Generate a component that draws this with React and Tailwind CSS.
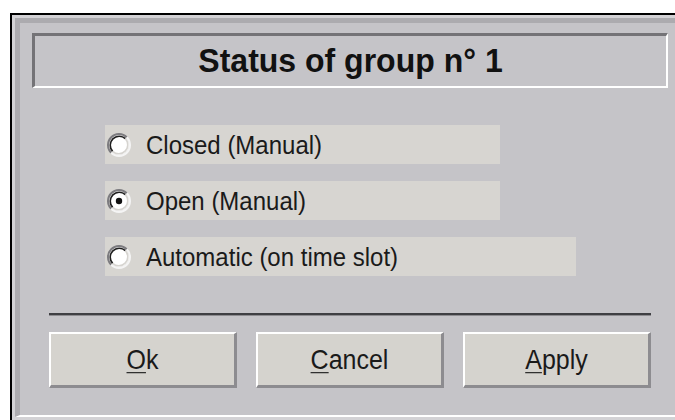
import { useState } from "react";

const options = [
    { id: "closed", label: "Closed (Manual)", width: "w-[395px]" },
    { id: "open", label: "Open (Manual)", width: "w-[395px]" },
    { id: "auto", label: "Automatic (on time slot)", width: "w-[471px]" },
];

// classic sunken radio knob
const RadioKnob = ({ checked }) => (
    <svg width="24" height="24" viewBox="0 0 24 24" className="shrink-0">
        <circle cx="12" cy="12" r="10" fill="#ffffff" />
        <path d="M4.22 19.78 A11 11 0 0 1 19.78 4.22" fill="none" stroke="#7d7c80" strokeWidth="2" />
        <path d="M19.78 4.22 A11 11 0 0 1 4.22 19.78" fill="none" stroke="#f4f4f4" strokeWidth="2" />
        <path d="M5.64 18.36 A9 9 0 0 1 18.36 5.64" fill="none" stroke="#1e1e1e" strokeWidth="1.6" />
        <path d="M18.36 5.64 A9 9 0 0 1 5.64 18.36" fill="none" stroke="#d6d4d0" strokeWidth="1.6" />
        {checked && <circle cx="12" cy="12" r="3.2" fill="#111111" />}
    </svg>
);

const Button = ({ mnemonic, rest }) => (
    <button
        type="button"
        className="w-[188px] h-[56px] flex items-center justify-center bg-[#d5d3ce] border-t-2 border-l-2 border-white border-b-[3px] border-r-[3px] border-b-[#8d8c90] border-r-[#8d8c90] text-[25px] text-[#1a1a1a]"
    >
        <span className="inline-block scale-y-110">
            <span className="underline underline-offset-[3px] decoration-1">{mnemonic}</span>
            {rest}
        </span>
    </button>
);

export default function App() {
    const [status, setStatus] = useState("open");

    return (
        <div className="w-[675px] h-[420px] overflow-hidden bg-white font-['Liberation_Sans',Arial,sans-serif]">
            <div className="ml-[10px] mt-[13px] w-[680px] h-[407px] border-l-2 border-t-2 border-black bg-[#d3d2d5] pl-[3px] pt-[3px]">
                <div className="h-[399px] flex flex-col bg-[#c5c4c8] border-l-[5px] border-t-[5px] border-[#acabaf] border-b-2 border-b-white">
                    {/* title bar */}
                    <div className="ml-[12px] mt-[10px] w-[636px] h-[55px] flex items-center justify-center border-t-[3px] border-l-[3px] border-[#747377] border-b-2 border-r-2 border-b-white border-r-white">
                        <span className="inline-block -mt-[2px] text-[32px] font-bold text-[#111111] leading-none scale-y-105">Status of group n° 1</span>
                    </div>

                    {/* status choices */}
                    <div className="ml-[85px] mt-[37px] flex flex-col gap-[17px]">
                        {options.map((opt) => (
                            <label
                                key={opt.id}
                                className={`${opt.width} h-[39px] flex items-center bg-[#d7d5d1] pl-[2px] cursor-default`}
                                onClick={() => setStatus(opt.id)}
                            >
                                <RadioKnob checked={status === opt.id} />
                                <span className="inline-block ml-[15px] text-[24px] text-[#1a1a1a] leading-none scale-y-110 origin-left">{opt.label}</span>
                            </label>
                        ))}
                    </div>

                    <div className="ml-[29px] mt-[37px] w-[602px] h-[3px] bg-[#3f3f43] border-b border-[#8d8c90]" />

                    <div className="ml-[29px] mt-[16px] flex gap-[19px]">
                        <Button mnemonic="O" rest="k" />
                        <Button mnemonic="C" rest="ancel" />
                        <Button mnemonic="A" rest="pply" />
                    </div>
                </div>
            </div>
        </div>
    );
}
